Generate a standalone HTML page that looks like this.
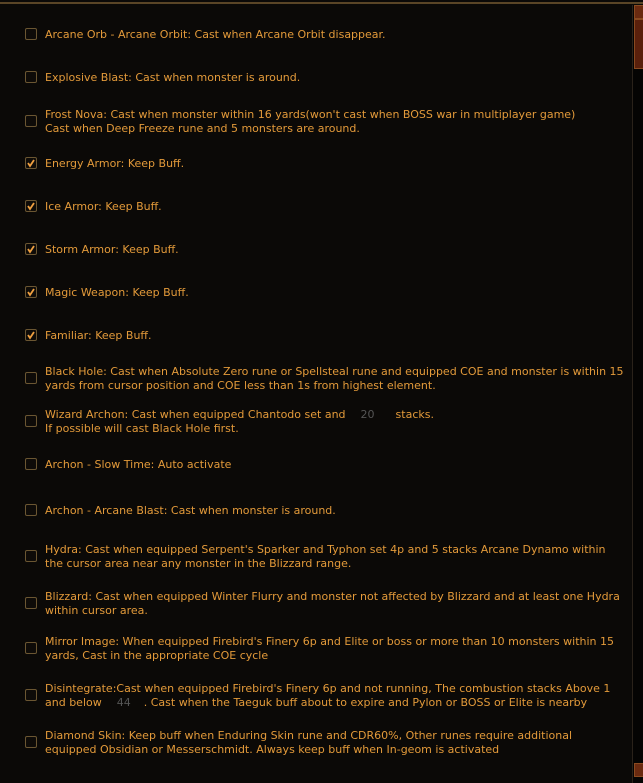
<!DOCTYPE html>
<html><head><style>
html,body{margin:0;padding:0;width:643px;height:783px;background:#0b0907;overflow:hidden}
body{position:relative;font-family:"DejaVu Sans","Liberation Sans",sans-serif;font-size:11px;color:#e39a3a}
.top{position:absolute;left:0;top:2px;width:643px;height:2px;background:#5a4526}
.cb{position:absolute;left:25px;width:10px;height:10px;border:1px solid #6b5632;border-radius:2px;background:#0e0b08}
.cb svg{position:absolute;left:0;top:0}
.t{position:absolute;left:45px;top:1px;line-height:14px;white-space:nowrap;letter-spacing:0px}
.n{color:#555;display:inline-block}
.sb{position:absolute;left:632px;top:5px;width:11px;height:778px;background:#050403;border-left:1px solid #2a221a}
.ar{position:absolute;left:634px;width:9px;height:12px;background:#6a2a10;border:1px solid #8a4a20}
.th{position:absolute;left:634px;top:19px;width:9px;height:48px;background:#5a200c;border:1px solid #8a4a20}
</style></head><body>
<div class="top"></div>
<div class="sb"></div>
<div class="ar" style="top:5px"></div>
<div class="th"></div>
<div class="ar" style="top:763px"></div>

<div class="cb" style="top:28px"></div><div class="t" style="top:28px">Arcane Orb - Arcane Orbit: Cast when Arcane Orbit disappear.</div>
<div class="cb" style="top:71px"></div><div class="t" style="top:71px">Explosive Blast: Cast when monster is around.</div>
<div class="cb" style="top:115px"></div><div class="t" style="top:108px">Frost Nova: Cast when monster within 16 yards(won't cast when BOSS war in multiplayer game)<br>Cast when Deep Freeze rune and 5 monsters are around.</div>
<div class="cb" style="top:157px"><svg width="10" height="10"><path d="M2 5 L4 8 L8 2" stroke="#f0a040" stroke-width="1.8" fill="none"/></svg></div><div class="t" style="top:157px">Energy Armor: Keep Buff.</div>
<div class="cb" style="top:200px"><svg width="10" height="10"><path d="M2 5 L4 8 L8 2" stroke="#f0a040" stroke-width="1.8" fill="none"/></svg></div><div class="t" style="top:200px">Ice Armor: Keep Buff.</div>
<div class="cb" style="top:243px"><svg width="10" height="10"><path d="M2 5 L4 8 L8 2" stroke="#f0a040" stroke-width="1.8" fill="none"/></svg></div><div class="t" style="top:243px">Storm Armor: Keep Buff.</div>
<div class="cb" style="top:286px"><svg width="10" height="10"><path d="M2 5 L4 8 L8 2" stroke="#f0a040" stroke-width="1.8" fill="none"/></svg></div><div class="t" style="top:286px">Magic Weapon: Keep Buff.</div>
<div class="cb" style="top:329px"><svg width="10" height="10"><path d="M2 5 L4 8 L8 2" stroke="#f0a040" stroke-width="1.8" fill="none"/></svg></div><div class="t" style="top:329px">Familiar: Keep Buff.</div>
<div class="cb" style="top:372px"></div><div class="t" style="top:365px">Black Hole: Cast when Absolute Zero rune or Spellsteal rune and equipped COE and monster is within 15<br>yards from cursor position and COE less than 1s from highest element.</div>
<div class="cb" style="top:415px"></div><div class="t" style="top:408px">Wizard Archon: Cast when equipped Chantodo set and<span class="n" style="width:35px;padding-left:15px">20</span>stacks.<br>If possible will cast Black Hole first.</div>
<div class="cb" style="top:458px"></div><div class="t" style="top:458px">Archon - Slow Time: Auto activate</div>
<div class="cb" style="top:504px"></div><div class="t" style="top:504px">Archon - Arcane Blast: Cast when monster is around.</div>
<div class="cb" style="top:550px"></div><div class="t" style="top:543px">Hydra: Cast when equipped Serpent's Sparker and Typhon set 4p and 5 stacks Arcane Dynamo within<br>the cursor area near any monster in the Blizzard range.</div>
<div class="cb" style="top:597px"></div><div class="t" style="top:590px">Blizzard: Cast when equipped Winter Flurry and monster not affected by Blizzard and at least one Hydra<br>within cursor area.</div>
<div class="cb" style="top:642px"></div><div class="t" style="top:635px">Mirror Image: When equipped Firebird's Finery 6p and Elite or boss or more than 10 monsters within 15<br>yards, Cast in the appropriate COE cycle</div>
<div class="cb" style="top:689px"></div><div class="t" style="top:682px">Disintegrate:Cast when equipped Firebird's Finery 6p and not running, The combustion stacks Above 1<br>and below<span class="n" style="width:27px;padding-left:15px">44</span>. Cast when the Taeguk buff about to expire and Pylon or BOSS or Elite is nearby</div>
<div class="cb" style="top:736px"></div><div class="t" style="top:729px">Diamond Skin: Keep buff when Enduring Skin rune and CDR60%, Other runes require additional<br>equipped Obsidian or Messerschmidt. Always keep buff when In-geom is activated</div>
</body></html>
